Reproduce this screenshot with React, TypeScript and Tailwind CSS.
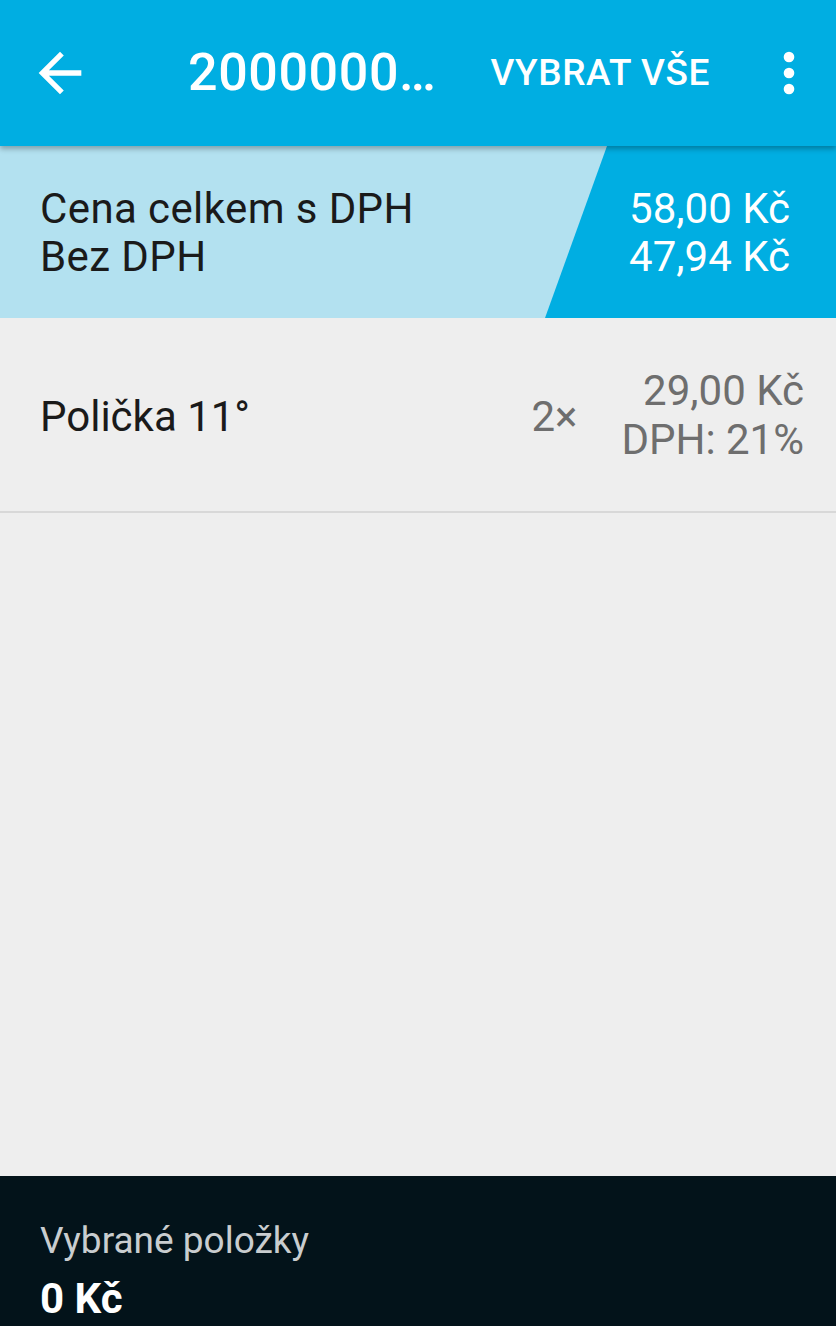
import React from 'react';

const font = { fontFamily: 'Roboto, "Noto Sans", sans-serif' };

function BackIcon() {
  return (
    <svg width="64" height="64" viewBox="0 0 24 24" fill="white">
      <path d="M20 11H7.83l5.59-5.59L12 4l-8 8 8 8 1.41-1.41L7.83 13H20v-2z" />
    </svg>
  );
}

function MoreIcon() {
  return (
    <svg width="64" height="64" viewBox="0 0 24 24" fill="white">
      <circle cx="12" cy="6" r="2" />
      <circle cx="12" cy="12" r="2" />
      <circle cx="12" cy="18" r="2" />
    </svg>
  );
}

export default function App() {
  return (
    <div className="flex h-[1326px] w-full flex-col overflow-hidden bg-[#eeeeee]" style={font}>
      {/* Toolbar */}
      <header className="relative z-10 flex h-[146px] shrink-0 items-center bg-[#00aee2] shadow-[0_3px_5px_rgba(0,0,0,0.28)]">
        <div className="ml-[28px]">
          <BackIcon />
        </div>
        <div className="ml-[96px] flex-1 text-[52px] font-medium tracking-[0.6px] text-white">2000000…</div>
        <div className="text-[37px] font-medium tracking-[0.6px] text-white">VYBRAT VŠE</div>
        <div className="ml-[47px] mr-[15px]">
          <MoreIcon />
        </div>
      </header>

      {/* Totals */}
      <section className="relative flex h-[172px] shrink-0 items-center bg-[#b3e1f0] pt-[2px]">
        <div className="absolute inset-0 bg-[#00aee2] [clip-path:polygon(607px_0,100%_0,100%_100%,545px_100%)]" />
        <div className="relative flex w-full items-center justify-between pl-[40px] pr-[46px] text-[42px] leading-[48px]">
          <div className="tracking-[0.4px] text-[#1a1a1a]">
            <div>Cena celkem s DPH</div>
            <div>Bez DPH</div>
          </div>
          <div className="text-right text-white">
            <div>58,00 Kč</div>
            <div>47,94 Kč</div>
          </div>
        </div>
      </section>

      {/* Items */}
      <div className="flex-1">
        <div className="flex h-[195px] items-center border-b-2 border-[#d8d8d8] pl-[40px] pr-[32px] text-[42px] leading-[49px]">
          <div className="flex-1 pt-[3px] text-[#1a1a1a]">Polička 11°</div>
          <div className="mr-[44px] pt-[3px] text-[#6e6e6e]">2×</div>
          <div className="text-right text-[#6e6e6e]">
            <div>29,00 Kč</div>
            <div>DPH: 21%</div>
          </div>
        </div>
      </div>

      {/* Selected summary */}
      <footer className="h-[150px] shrink-0 bg-[#03131a] pl-[40px] pt-[43px]">
        <div className="text-[37px] leading-[43px] text-[#c9cdcf]">Vybrané položky</div>
        <div className="mt-[12px] text-[42px] font-bold leading-[49px] text-white">0 Kč</div>
      </footer>
    </div>
  );
}
